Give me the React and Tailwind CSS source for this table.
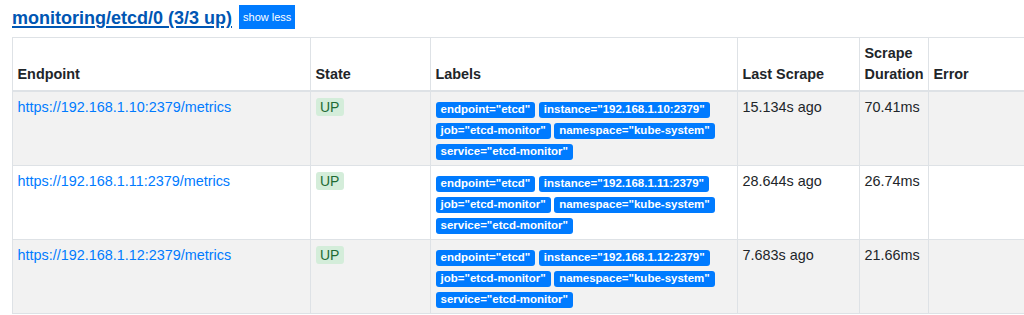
import React from "react";

const rows = [
  { ip: "192.168.1.10", last: "15.134s ago", dur: "70.41ms", striped: true },
  { ip: "192.168.1.11", last: "28.644s ago", dur: "26.74ms", striped: false },
  { ip: "192.168.1.12", last: "7.683s ago", dur: "21.66ms", striped: true },
];

function Label({ children }) {
  return (
    <span className="flex h-[16px] items-center rounded-[3px] bg-[#007bff] px-[5px] text-[11.5px] font-bold leading-none text-white">
      {children}
    </span>
  );
}

const cell =
  "border border-[#dee2e6] px-[4.5px] py-[4.5px] align-top text-[14.4px] leading-[21.6px]";
const head =
  "border border-b-2 border-[#dee2e6] px-[4.5px] py-[4.5px] align-bottom text-left text-[14.4px] font-bold leading-[21.6px] text-[#212529]";

export default function App() {
  return (
    <div
      className="w-[1024px] overflow-hidden bg-white pl-[12px] pt-[5px] text-[#212529]"
      style={{ fontFamily: '"Liberation Sans", Arial, sans-serif' }}
    >
      <div className="flex items-start gap-[7px]">
        <a className="text-[18px] font-bold leading-[27px] text-[#0056b3] underline decoration-[1.5px] underline-offset-[2px]">
          monitoring/etcd/0 (3/3 up)
        </a>
        <button className="flex h-[24px] items-center bg-[#007bff] px-[4px] text-[11px] leading-none text-white">
          show less
        </button>
      </div>
      <table className="mt-[5px] w-[1037px] table-fixed border-collapse">
        <colgroup>
          <col className="w-[298px]" />
          <col className="w-[120px]" />
          <col className="w-[307px]" />
          <col className="w-[122px]" />
          <col className="w-[69px]" />
          <col className="w-[121px]" />
        </colgroup>
        <thead>
          <tr>
            <th className={head}>Endpoint</th>
            <th className={head}>State</th>
            <th className={head}>Labels</th>
            <th className={head}>Last Scrape</th>
            <th className={head}>Scrape Duration</th>
            <th className={head}>Error</th>
          </tr>
        </thead>
        <tbody>
          {rows.map((r) => (
            <tr key={r.ip} className={r.striped ? "bg-[#f2f2f2]" : "bg-white"}>
              <td className={cell}>
                <a className="text-[#007bff]">https://{r.ip}:2379/metrics</a>
              </td>
              <td className={cell}>
                <div className="flex pt-[1.5px]">
                  <span className="rounded-[3px] bg-[#d4edda] px-[4.5px] text-[14px] leading-[18px] text-[#1e6b34]">
                    UP
                  </span>
                </div>
              </td>
              <td className={cell}>
                <div className="flex flex-wrap gap-x-[3.5px] gap-y-[5px] pb-[0.5px] pt-[5.5px]">
                  <Label>endpoint="etcd"</Label>
                  <Label>instance="{r.ip}:2379"</Label>
                  <Label>job="etcd-monitor"</Label>
                  <Label>namespace="kube-system"</Label>
                  <Label>service="etcd-monitor"</Label>
                </div>
              </td>
              <td className={cell}>{r.last}</td>
              <td className={cell}>{r.dur}</td>
              <td className={cell}></td>
            </tr>
          ))}
        </tbody>
      </table>
    </div>
  );
}
